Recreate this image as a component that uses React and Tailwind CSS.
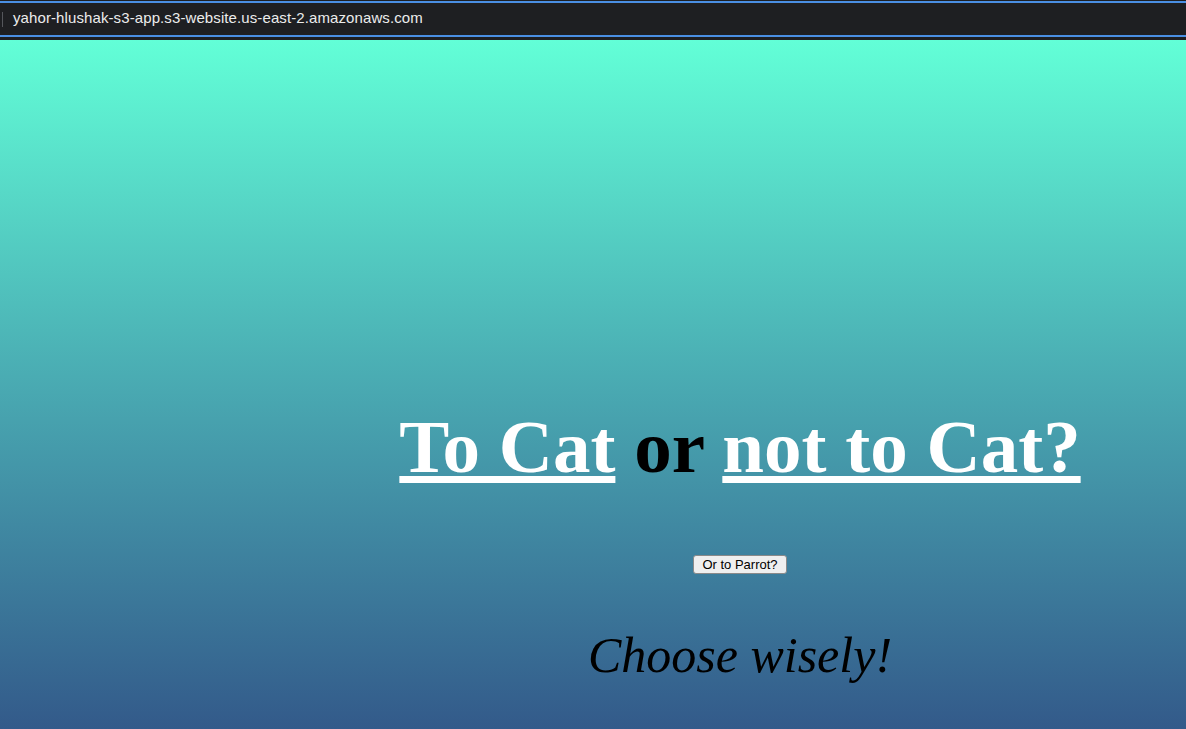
import React from "react";

function AddressBar() {
    return (
        <div className="h-[40px] bg-[#1e1f22] pt-[1px]">
            <div className="h-[36px] border-y-2 border-[#4a8fe3] flex items-center">
                <div className="w-px h-[15px] bg-[#55575c] ml-[2px]" />
                <span className="ml-[10px] -mt-[2px] text-[15px] text-[#ececec] font-['Liberation_Sans',sans-serif] tracking-[0.1px]">
                    yahor-hlushak-s3-app.s3-website.us-east-2.amazonaws.com
                </span>
            </div>
        </div>
    );
}

export default function App() {
    return (
        <div className="w-[1186px] h-[729px] overflow-hidden">
            <AddressBar />
            <main className="h-[689px] bg-linear-to-b from-[#62ffd7] to-[#335a8a] pl-[294px] flex flex-col items-center font-['Liberation_Serif',serif]">
                <h1 className="mt-[364px] text-[75px] leading-[85px] font-bold whitespace-nowrap">
                    <a href="#" className="text-white underline">To Cat</a>
                    <span className="text-black"> or </span>
                    <a href="#" className="text-white underline">not to Cat?</a>
                </h1>
                <button className="mt-[66px] h-[19px] w-[94px] bg-[#efefef] border border-[#8a8a8a] rounded-[3px] text-[13px] leading-none text-black font-['Liberation_Sans',sans-serif] pb-[1px]">
                    Or to Parrot?
                </button>
                <p className="mt-[52px] text-[50px] leading-[58px] italic text-black">
                    Choose wisely!
                </p>
            </main>
        </div>
    );
}
